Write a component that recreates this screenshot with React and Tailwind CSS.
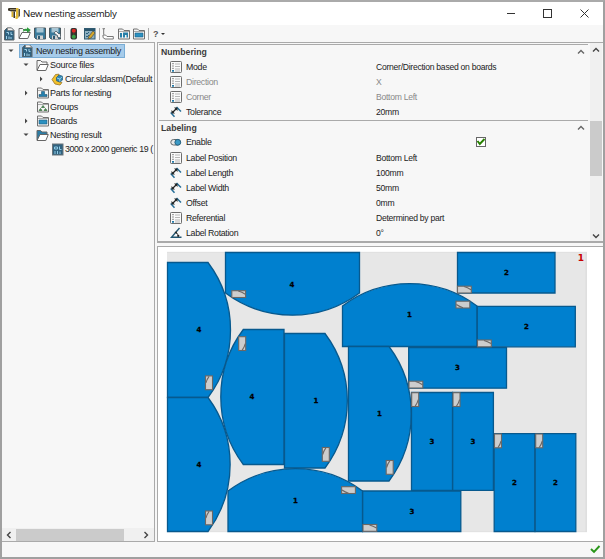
import React from "react";

function Svg({ w = 14, h = 14, className = "", children }) {
  return (
    <svg width={w} height={h} viewBox={`0 0 ${w} ${h}`} fill="none" className={`block shrink-0 ${className}`}>
      {children}
    </svg>
  );
}

function AppIcon() {
  return (
    <Svg w={13} h={13}>
      <path d="M0 1.500 1.500 1H8v3.500H3.500L0 3.500z" fill="#3a3428" />
      <path d="M2 2h6v1H2z" fill="#8d8468" />
      <path d="M3.500 4.500h2V10h-2z" fill="#d8b02b" />
      <path d="M5.500 4.500h1.500V11H5.500z" fill="#3a352c" />
      <path d="M8 1h2.500v8L9.500 12H7.500V9H8z" fill="#e3bb35" />
      <path d="M10.500 2H12v6.500l-1.500 2.500z" fill="#57503e" />
    </Svg>
  );
}

function NestIcon() {
  return (
    <Svg w={12} h={14}>
      <path d="M1.500 3.500 4 1h4.500L11 3.500V13H1.500z" fill="#2f6280" stroke="#5b646a" />
      <path d="M4.500 3.500V1h4L11 3.500z" fill="#f4f4f4" stroke="#777" strokeWidth=".7" />
      <path d="M3.500 5.500h2v2M3.500 9v3M6 9.500V12M8 5v2.500h1.500M8 10v2" stroke="#a4d3ea" />
    </Svg>
  );
}

function SheetIcon() {
  return (
    <Svg w={12} h={13}>
      <rect x=".5" y="1" width="10.500" height="11" fill="#2f6280" stroke="#6a757b" />
      <path d="M2.500 4h3v2h-3zM3 8v3M5.500 8v3M7.500 3.500v3H9.500M8 8.500v2.500" stroke="#8fcbe6" />
    </Svg>
  );
}

function FolderIcon({ kind }) {
  if (kind === "open" || kind === "import" || kind === "result") {
    return (
      <Svg w={13} h={13}>
        <path d="M1 11V1.500h3.500L6 3h5v3" fill={kind === "result" ? "#2b7da6" : "#f6f6f6"} stroke="#666" />
        <path d="M1 11.500 4 5.500h8.300l-2.500 6z" fill="#fff" stroke="#666" />
        {kind === "import" && <path d="M5 5C5 2 7 1.500 9 2V.2L12.800 3 9 5.800V4C7 3.500 6 4 5 5z" fill="#2c9a3c" />}
      </Svg>
    );
  }
  return (
    <Svg w={12} h={12}>
      <path d="M.5 11V1h4L6 2.500h5.500V11z" fill="#f4f4f4" stroke="#707070" />
      <path d="M1 3.500h10" stroke="#aaa" />
      {kind === "parts" && <path d="M2 9.500V7.500h2.500V4.500h3v3H10v2z" fill="#2380ae" stroke="#205472" strokeWidth=".6" />}
      {kind === "groups" && <path d="M2 9.500l1.500-2L5 9.500zM4.500 6.500 6 4.500l1.500 2zM7 9.500l1.500-2L10 9.500z" fill="#4f9759" stroke="#35683c" strokeWidth=".7" />}
      {kind === "boards" && <path d="M2 5h8v4H2z" fill="#2b91c1" stroke="#205e80" strokeWidth=".6" />}
      {kind === "nest" && <path d="M2 5h2v4.500H2zM5 4.500h5v5H8.500V7H7v2.500H5z" fill="#277fa9" />}
    </Svg>
  );
}

function SaveIcon({ edit }) {
  return (
    <Svg w={12} h={13}>
      <path d="M.5 1h11v11H2L.5 10.500z" fill="#397a9b" stroke="#4b5960" />
      <path d="M2.500 1h7v4.500h-7z" fill="#a9c6d4" />
      <path d="M3 8.500h6V12H3z" fill="#d2d2d2" />
      <path d="M4 9h2v3H4z" fill="#315a70" />
      {edit && <path d="m5 6 2-2 3 3 1-1 1 5-4-1 1-1z" fill="#f4f4f4" stroke="#394b54" strokeWidth=".7" />}
    </Svg>
  );
}

function TrafficIcon() {
  return (
    <Svg w={8} h={13}>
      <rect x=".5" y="1" width="6.500" height="11.500" rx="2" fill="#313331" />
      <circle cx="3.800" cy="3.700" r="2" fill="#df2924" />
      <circle cx="3.800" cy="7" r=".8" fill="#5d512a" />
      <circle cx="3.800" cy="9.800" r="2" fill="#39a344" />
    </Svg>
  );
}

function OptionsIcon() {
  return (
    <Svg w={12} h={13}>
      <rect x=".5" y="1.500" width="10.500" height="10.500" fill="#8fb0c0" stroke="#315b71" />
      <path d="M1 2h10v2H1z" fill="#29556d" />
      <path d="m2 6 1 1 2-2M2 9l1 1 2-2" stroke="#28617f" />
      <path d="m5 9 4-5 2 2-4 5-3 1z" fill="#d5a72a" stroke="#4e4d43" strokeWidth=".7" />
    </Svg>
  );
}

function AssemblyIcon() {
  return (
    <Svg w={13} h={13}>
      <path d="M1 6.500 4.500 1.500 8 1.200 6 5.500l1 3L11 9.500l-2 2.500-5-1z" fill="#f2c12c" stroke="#9a7421" strokeWidth=".8" />
      <path d="m5.500 4.500 2.500-2.500 3.500 1.200v3.800L9 9 5.500 7.800z" fill="#2e86b3" stroke="#275b76" strokeWidth=".7" />
      <path d="m6 5 2.800 1v2.500M8.800 6 11 3.800" stroke="#b9e4f4" strokeWidth=".8" />
    </Svg>
  );
}

function PropIcon({ type }) {
  if (type === "length")
    return (
      <Svg w={12} h={12}>
        <path d="M.7 6.500 4.500 10.800M6.500 1l4.500 4.500" stroke="#256e98" strokeWidth="1.500" />
        <path d="M2.500 6.500 6.500 2.500" stroke="#222" strokeWidth="1.200" />
        <path d="M1.500 4v3.500H5zM4 1.500h3.500V5z" fill="#202527" />
      </Svg>
    );
  if (type === "toggle")
    return (
      <Svg w={12} h={12}>
        <rect x=".8" y="3.500" width="9.500" height="5.500" rx="2.700" fill="#e7e7e7" stroke="#646b6e" />
        <circle cx="7.800" cy="6.300" r="2.900" fill="#3b9ac6" stroke="#27617e" />
      </Svg>
    );
  if (type === "angle")
    return (
      <Svg w={12} h={12}>
        <path d="M9.500 1 1.500 10.300H11.500" stroke="#245772" strokeWidth="1.400" />
        <path d="M5.500 5.500c2 .5 3 2.500 2.500 4.500" stroke="#222" />
        <path d="m4.500 5 2.500-.5L6.500 7zM7 8h2.500L8.500 10z" fill="#222" />
      </Svg>
    );
  return (
    <Svg w={12} h={12}>
      <rect x=".5" y=".5" width="11" height="11" rx=".8" fill="#fafafa" stroke="#6d6d6d" />
      <path d="M5 3h5M5 5.500h5M5 8h5M5 10h5" stroke="#a5a5a5" strokeWidth=".8" />
      <path d="M2.300 2.700h1.400M2.300 5h1.400M2.300 7.300h1.400" stroke="#646464" />
      <path d="M2 9h2v1.700H2z" fill="#237aa9" />
    </Svg>
  );
}

function TreeRow({ indent, arrow, icon, text, selected, tight }) {
  return (
    <div className={`flex h-[14px] items-center ${indent}`}>
      <div className={`flex w-[12px] shrink-0 items-center ${selected ? "pl-[1px]" : ""}`}>
        {arrow && (
          <Svg w={6} h={6}>
            {arrow === "down" ? <path d="M.5 1.500h5L3 4z" fill="#444" /> : <path d="M2 .5v5L4.500 3z" fill="#444" />}
          </Svg>
        )}
      </div>
      <div className={`flex h-[14px] shrink-0 items-center ${selected ? "w-[106px] bg-[#a6cbea] outline outline-1 -outline-offset-1 outline-[#79add5]" : ""}`}>
        <div className="flex w-[15px] shrink-0 justify-center">{icon}</div>
        <span className={`whitespace-nowrap leading-[14px] ${tight ? "text-[8.8px] tracking-[-0.4px]" : "text-[9px] tracking-[-0.25px]"} ${selected ? "pl-[2px]" : ""}`}>{text}</span>
      </div>
    </div>
  );
}

function Chevron({ dir = "up", dark }) {
  return (
    <Svg w={8} h={8}>
      <path
        d={{ up: "M1 5.500 4 2.500l3 3", down: "M1 2.500 4 5.500l3-3", left: "M5.500 1 2.500 4l3 3", right: "M2.500 1 5.500 4l-3 3" }[dir]}
        stroke={dark ? "#444" : "#666"}
        strokeWidth="1.400"
      />
    </Svg>
  );
}

function PropRow({ type, label, value, disabled, check }) {
  return (
    <div className={`flex h-[15.2px] items-center pl-[11px] ${disabled ? "text-[#898989]" : "text-[#1c1c1c]"}`}>
      <PropIcon type={type} />
      <span className="w-[194px] shrink-0 whitespace-nowrap pl-[4px] text-[8.8px] leading-[14px] tracking-[-0.32px]">{label}</span>
      {check ? (
        <span className="ml-[100px]">
          <Svg w={10} h={10}>
            <rect x=".5" y=".5" width="9" height="9" fill="#fff" stroke="#666" />
            <path d="m1.500 4 2.300 3L8.500 2" stroke="#278000" strokeWidth="1.900" />
          </Svg>
        </span>
      ) : (
        <span className="whitespace-nowrap text-[8.6px] leading-[14px] tracking-[-0.27px]">{value}</span>
      )}
    </div>
  );
}

function Section({ title, children }) {
  return (
    <section className="border-t border-[#aaa]">
      <div className="flex h-[14px] items-center justify-between pl-[2px] pr-[3px]">
        <h2 className="text-[8.7px] font-bold leading-[14px] text-[#3b3b3b]">{title}</h2>
        <Chevron />
      </div>
      {children}
    </section>
  );
}

const shapes = [
  { d: "M167.500 262.500H208A112.500 112.500 0 0 1 208 397.500H167.500Z", n: 4, x: 199, y: 330 },
  { d: "M167.500 397.500H208A112.500 112.500 0 0 1 208 531.500H167.500Z", n: 4, x: 199, y: 465 },
  { d: "M225.500 252.500H359.500V293A112.500 112.500 0 0 1 225.500 293Z", n: 4, x: 292, y: 284.500 },
  { d: "M342.500 346.500V306A112.500 112.500 0 0 1 477 306V346.500Z", n: 1, x: 409.500, y: 315 },
  { d: "M284 329.500H243.300A112.500 112.500 0 0 0 243.300 464.500H284Z", n: 4, x: 252, y: 397 },
  { d: "M284.500 333.500H325A112.500 112.500 0 0 1 325 468H284.500Z", n: 1, x: 316, y: 401 },
  { d: "M348.500 346.500H389A112.500 112.500 0 0 1 389 481H348.500Z", n: 1, x: 379.500, y: 414 },
  { d: "M228 531.500V491A112.500 112.500 0 0 1 362.500 491V531.500Z", n: 1, x: 295.500, y: 500.500 },
  { d: "M457.500 252.500H555V293H457.500Z", n: 2, x: 506.500, y: 273 },
  { d: "M477.300 306.300H575.300V346.800H477.300Z", n: 2, x: 526.500, y: 327 },
  { d: "M408.700 347.700H506.500V388.200H408.700Z", n: 3, x: 457.500, y: 368 },
  { d: "M411.500 392.500H452.500V490.300H411.500Z", n: 3, x: 432, y: 442 },
  { d: "M452.700 392.500H493.400V490.300H452.700Z", n: 3, x: 473, y: 442 },
  { d: "M362.700 491H460.800V531.500H362.700Z", n: 3, x: 412, y: 511.500 },
  { d: "M494.200 433.700H534.800V531.500H494.200Z", n: 2, x: 514.500, y: 483 },
  { d: "M535.200 433.700H575.800V531.500H535.200Z", n: 2, x: 555.500, y: 483 },
];

const tags = [
  [231.8, 290.7, "h"], [457.5, 286.2, "h"], [456, 301.200, "hb"], [477.500, 340, "h"],
  [409, 381.200, "h"], [341.600, 486.700, "hb"], [363, 524.500, "h"],
  [238.700, 336.700, "vr"], [205.500, 375.900, "vl"], [205.500, 511, "vl"],
  [322.300, 447.500, "vl"], [386.200, 460.500, "vl"],
  [411.700, 392.700, "vr"], [453, 392.700, "vr"], [494.500, 434, "vr"], [535.700, 434, "vr"],
];

function NestingView() {
  return (
    <svg width="445" height="294" viewBox="158 247 445 294" className="block">
      <rect x="167" y="252" width="419.500" height="280" fill="#e7e7e7" />
      <path d="M586.200 252v280" stroke="#d7d7d7" />
      <path d="M167 252.300h420M167 531.700h420" stroke="#dcdcdc" strokeWidth=".7" />
      <g fill="#0080cf" stroke="#07598e" strokeWidth="1.300">
        {shapes.map((s, i) => <path key={i} d={s.d} />)}
      </g>
      <g stroke="#6b6765" strokeWidth="1.100">
        {tags.map(([x, y, t], i) => {
          const w = t[0] === "h" ? 13.8 : 7;
          const h = t[0] === "h" ? 6.8 : 13.8;
          const mark = { h: "M6.500 .4Q10 1.500 13.500 3.500", hb: "M.4 3.300Q3.500 5.500 7 6.500", vl: "M.4 7Q1.300 3.500 3.600 .4", vr: "M6.600 7Q5.700 10.500 3.500 13.500" }[t];
          return (
            <g key={i} transform={`translate(${x} ${y})`}>
              <rect width={w} height={h} fill="#cdcdcd" />
              <path d={mark} fill="none" />
            </g>
          );
        })}
      </g>
      <g className="font-[family-name:'DejaVu_Sans',sans-serif] text-[7px] font-bold" textAnchor="middle" fill="#000" stroke="#000" strokeWidth=".3">
        {shapes.map((s, i) => <text key={i} x={s.x} y={s.y + 2.300}>{s.n}</text>)}
      </g>
      <text x="580.800" y="261" textAnchor="middle" fill="#c70000" className="font-[family-name:'DejaVu_Sans',sans-serif] text-[9px] font-bold">1</text>
    </svg>
  );
}

export default function App() {
  return (
    <main className="flex h-[559px] w-[605px] flex-col overflow-hidden border-2 border-[#a0a0a0] border-t-[#aaa] bg-[#f7f7f7] font-[family-name:'Liberation_Sans',Arial,sans-serif] text-[#222]">
      <header className="flex h-[23px] shrink-0 items-center bg-white pl-[6px]">
        <AppIcon />
        <h1 className="ml-[2px] whitespace-nowrap font-[family-name:'Open_Sans',sans-serif] text-[9.7px] leading-[16px] tracking-[-0.36px] text-[#111]">New nesting assembly</h1>
        <div className="ml-auto flex items-center gap-[28px] pr-[14px]">
          <Svg w={8} h={9}><path d="M0 4.500h8" stroke="#333" /></Svg>
          <Svg w={9} h={9}><rect x=".5" y=".5" width="8" height="8" stroke="#333" /></Svg>
          <Svg w={9} h={9}><path d="m.5.5 8 8m0-8-8 8" stroke="#333" /></Svg>
        </div>
      </header>
      <div className="flex h-[17px] shrink-0 items-center pl-[1px]">
        <NestIcon />
        <span className="ml-[3px]"><FolderIcon kind="import" /></span>
        <span className="ml-[3px]"><SaveIcon /></span>
        <span className="ml-[3px]"><SaveIcon edit /></span>
        <i className="ml-[3px] h-[12px] w-px bg-[#aaa]" />
        <span className="ml-[5px]"><TrafficIcon /></span>
        <span className="ml-[6px]"><OptionsIcon /></span>
        <i className="ml-[3px] h-[12px] w-px bg-[#aaa]" />
        <span className="ml-[2px]">
          <Svg w={12} h={12}><path d="M.5.7h2.500M1.700 1v5.500M1 7h2.500l1.500 1.500h6.300V11H3L1 9.500z" fill="#fff" stroke="#777" /></Svg>
        </span>
        <span className="ml-[4px]"><FolderIcon kind="nest" /></span>
        <span className="ml-[3px]"><FolderIcon kind="boards" /></span>
        <i className="ml-[3px] h-[12px] w-px bg-[#aaa]" />
        <span className="ml-[4px] w-[5px] text-[9px] font-bold leading-[14px] text-[#555]">?</span>
        <span className="ml-[3px]"><Svg w={4} h={4}><path d="M0 1h4L2 3z" fill="#333" /></Svg></span>
      </div>
      <div className="flex h-[500px] shrink-0">
        <aside className="flex w-[153px] shrink-0 flex-col overflow-hidden border border-l-0 border-[#aaa]">
          <div className="flex-1 overflow-hidden pt-[1px]">
            <TreeRow indent="pl-[5px]" arrow="down" icon={<NestIcon />} text="New nesting assembly" selected />
            <TreeRow indent="pl-[21px]" arrow="down" icon={<FolderIcon kind="open" />} text="Source files" />
            <TreeRow indent="pl-[36px]" arrow="right" icon={<AssemblyIcon />} text="Circular.sldasm(Default" />
            <TreeRow indent="pl-[21px]" arrow="right" icon={<FolderIcon kind="parts" />} text="Parts for nesting" />
            <TreeRow indent="pl-[21px]" icon={<FolderIcon kind="groups" />} text="Groups" />
            <TreeRow indent="pl-[21px]" arrow="right" icon={<FolderIcon kind="boards" />} text="Boards" />
            <TreeRow indent="pl-[21px]" arrow="down" icon={<FolderIcon kind="result" />} text="Nesting result" />
            <TreeRow indent="pl-[36px]" icon={<SheetIcon />} text="3000 x 2000 generic 19 (" tight />
          </div>
          <div className="flex h-[13px] shrink-0 items-center bg-[#f0f0f0] pl-[3px]">
            <Chevron dir="left" dark />
            <div className="ml-[3px] h-[12px] w-[108px] bg-[#cbcbcb]" />
            <div className="ml-[18px]"><Chevron dir="right" dark /></div>
          </div>
        </aside>
        <div className="ml-[2px] flex w-[446px] shrink-0 flex-col">
          <div className="flex h-[201px] shrink-0 border border-r-0 border-[#aaa] border-b-2">
            <div className="w-[430px] pl-[1px] pt-[1px]">
              <Section title="Numbering">
                <PropRow label="Mode" value="Corner/Direction based on boards" />
                <PropRow label="Direction" value="X" disabled />
                <PropRow label="Corner" value="Bottom Left" disabled />
                <PropRow type="length" label="Tolerance" value="20mm" />
              </Section>
              <Section title="Labeling">
                <PropRow type="toggle" label="Enable" check />
                <PropRow label="Label Position" value="Bottom Left" />
                <PropRow type="length" label="Label Length" value="100mm" />
                <PropRow type="length" label="Label Width" value="50mm" />
                <PropRow type="length" label="Offset" value="0mm" />
                <PropRow label="Referential" value="Determined by part" />
                <PropRow type="angle" label="Label Rotation" value="0°" />
              </Section>
            </div>
            <div className="ml-[2px] flex w-[12px] flex-col items-center bg-[#f0f0f0] pt-[3px]">
              <Chevron dark />
              <div className="mt-[67px] h-[55px] w-[12px] bg-[#cbcbcb]" />
              <div className="mb-[1px] mt-auto"><Chevron dir="down" dark /></div>
            </div>
          </div>
          <div className="mt-[3px] h-[296px] overflow-hidden border border-r-0 border-[#aaa] bg-white">
            <NestingView />
          </div>
        </div>
      </div>
      <footer className="flex h-[15px] shrink-0 items-center justify-end pr-[2px]">
        <Svg w={11} h={9}><path d="m1 4 3 3 5.500-6" stroke="#299618" strokeWidth="1.900" /></Svg>
      </footer>
    </main>
  );
}
